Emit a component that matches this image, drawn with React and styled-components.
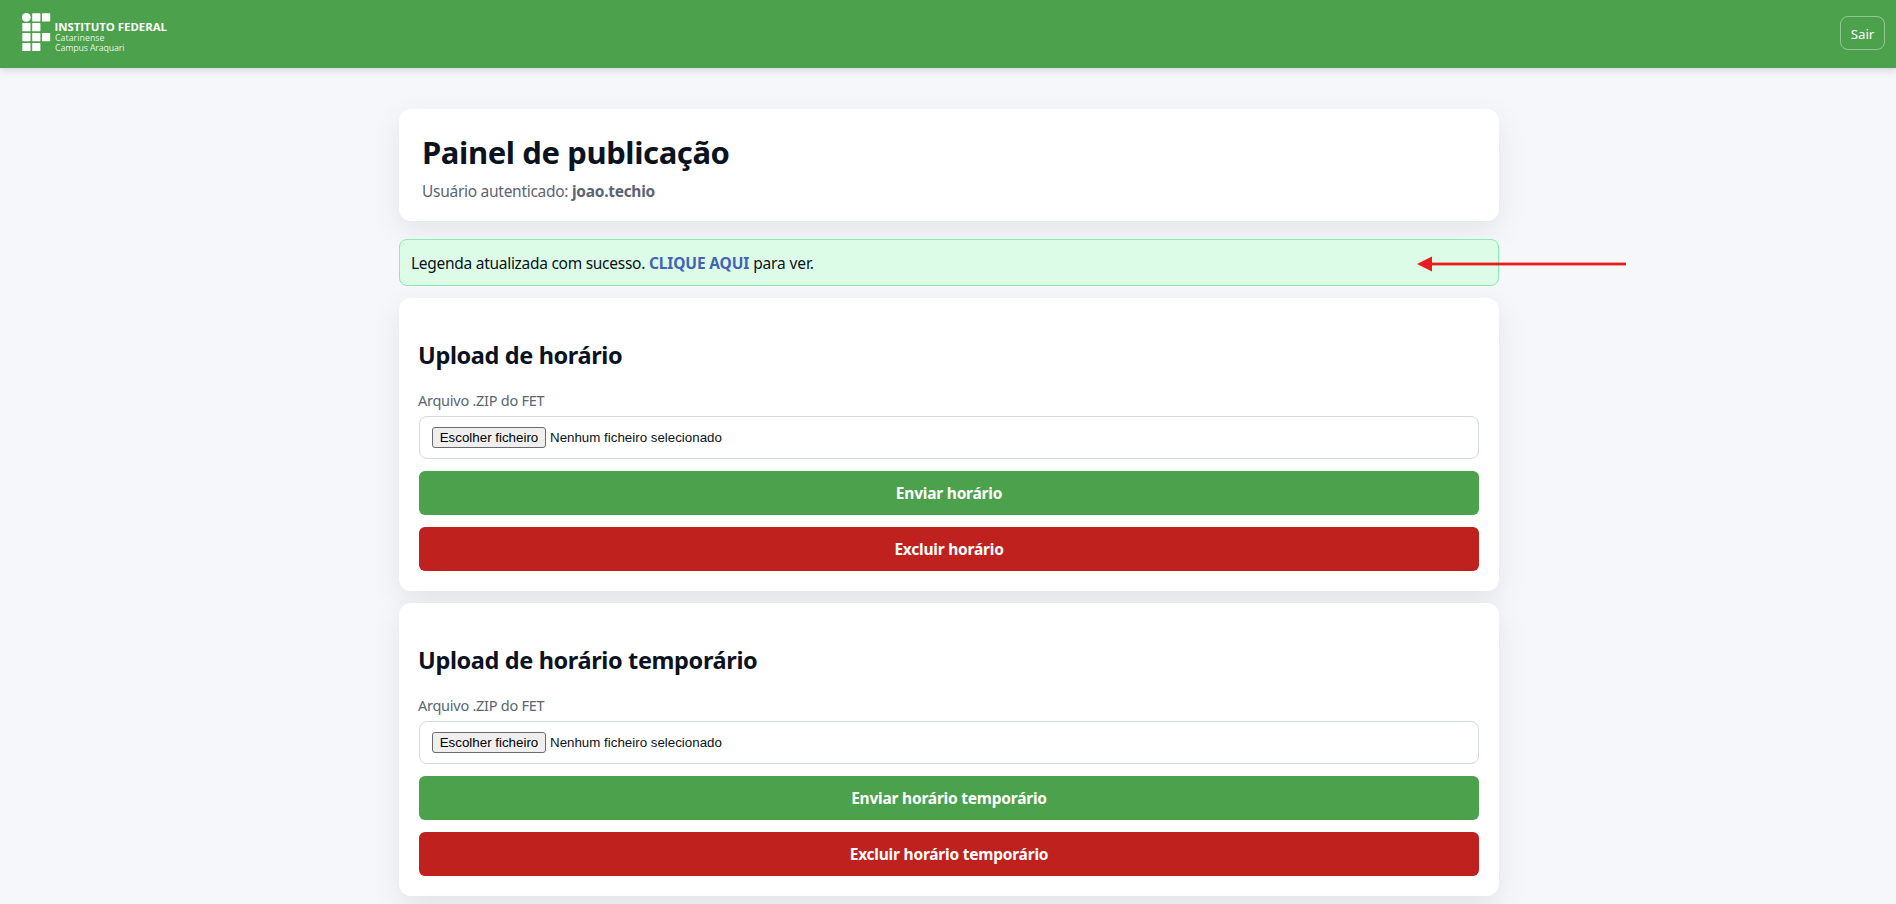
import React from 'react';
import styled, { createGlobalStyle } from 'styled-components';

const uploads = [
  { id: 1, name: 'horário' },
  { id: 2, name: 'horário temporário' },
];

const Logo = () => (
  <svg width="146" height="42" viewBox="0 0 146 42" fill="#fff">
    <circle cx="4.3" cy="4.3" r="4.4" />
    <rect x="10.2" y="0.2" width="8.2" height="8.2" rx="0.6" />
    <rect x="20" y="0.2" width="8.2" height="8.2" rx="0.6" />
    <rect x="0.3" y="10.1" width="8.2" height="8.2" rx="0.6" />
    <rect x="10.2" y="10.1" width="8.2" height="8.2" rx="0.6" />
    <rect x="0.3" y="20" width="8.2" height="8.2" rx="0.6" />
    <rect x="10.2" y="20" width="8.2" height="8.2" rx="0.6" />
    <rect x="20" y="20" width="8.2" height="8.2" rx="0.6" />
    <rect x="0.3" y="29.9" width="8.2" height="8.2" rx="0.6" />
    <rect x="10.2" y="29.9" width="8.2" height="8.2" rx="0.6" />
    <g fontFamily="'Open Sans', sans-serif">
      <text x="32.5" y="18" fontSize="11.4" fontWeight="700" textLength="112.5">
        INSTITUTO FEDERAL
      </text>
      <text x="33" y="28.3" fontSize="8.8" textLength="49.5" fillOpacity="0.9">
        Catarinense
      </text>
      <text x="33" y="38.3" fontSize="8.8" textLength="69.5" fillOpacity="0.9">
        Campus Araquari
      </text>
    </g>
  </svg>
);

const UploadCard = ({ name }) => (
  <Section>
    <SectionTitle>Upload de {name}</SectionTitle>
    <Label>Arquivo .ZIP do FET</Label>
    <FileField>
      <FileButton type="button">Escolher ficheiro</FileButton>
      <FileName>Nenhum ficheiro selecionado</FileName>
    </FileField>
    <ActionButton>Enviar {name}</ActionButton>
    <ActionButton $danger>Excluir {name}</ActionButton>
  </Section>
);

const App = () => {
  return (
    <Page>
      <GlobalStyle />
      <Header>
        <Logo />
        <LogoutButton>Sair</LogoutButton>
      </Header>
      <Main>
        <Intro>
          <Title>Painel de publicação</Title>
          <Subtitle>
            Usuário autenticado: <strong>joao.techio</strong>
          </Subtitle>
        </Intro>
        <Alert>
          <AlertText>Legenda atualizada com sucesso.</AlertText>
          <AlertLink href="#">CLIQUE AQUI</AlertLink>
          <AlertText $loose>para ver.</AlertText>
          <Arrow width="210" height="16" viewBox="0 0 210 16" fill="#e81c1c">
            <path d="M0 8 L15 0.5 V15.5 Z" />
            <rect x="14" y="6.6" width="195" height="2.8" />
          </Arrow>
        </Alert>
        {uploads.map(upload => (
          <UploadCard key={upload.id} name={upload.name} />
        ))}
        <Section />
      </Main>
    </Page>
  );
};

export default App;

const GlobalStyle = createGlobalStyle`
  * {
    box-sizing: border-box;
  }
  body {
    margin: 0;
    height: 904px;
    overflow: hidden;
    background: #f5f7fb;
    color: #0b1220;
    font-family: 'Noto Sans', 'Open Sans', sans-serif;
    font-size: 16px;
  }
`;

const Page = styled.div`
  width: 1898px;
  height: 904px;
  overflow: hidden;
`;

const Header = styled.header`
  display: flex;
  align-items: flex-start;
  justify-content: space-between;
  height: 68px;
  padding: 13px 13px 0 22px;
  background: #4ca14c;
  box-shadow: 0 2px 8px rgba(0, 0, 0, 0.15);
`;

const LogoutButton = styled.button`
  width: 45px;
  height: 34px;
  margin-top: 3px;
  padding: 1px 0 0;
  border: 1px solid rgba(255, 255, 255, 0.4);
  border-radius: 8px;
  background: transparent;
  color: #fff;
  font-family: inherit;
  font-size: 13.3px;
`;

const Main = styled.main`
  display: flex;
  flex-direction: column;
  gap: 12px;
  width: 1100px;
  margin: 41px auto 0;
`;

const Card = styled.section`
  flex-shrink: 0;
  border-radius: 12px;
  background: #fff;
  box-shadow: 0 10px 30px rgba(0, 0, 0, 0.08);
`;

const Intro = styled(Card)`
  height: 112px;
  margin-bottom: 6px;
  padding: 21px 23px;
`;

const Title = styled.h1`
  margin: 0;
  font-size: 31px;
  line-height: 44px;
  letter-spacing: -0.4px;
`;

const Subtitle = styled.p`
  margin: 6px 0 0;
  color: #5b6474;
  font-size: 15.5px;
  line-height: 22px;
  letter-spacing: -0.28px;
`;

const Alert = styled.div`
  position: relative;
  display: flex;
  align-items: center;
  gap: 4px;
  height: 47px;
  padding: 0 11px;
  border: 1px solid #86efac;
  border-radius: 8px;
  background: #dcfce7;
`;

const AlertText = styled.span`
  font-size: 15.5px;
  letter-spacing: ${({ $loose }) => ($loose ? '-0.13px' : '-0.28px')};
`;

const AlertLink = styled.a`
  color: #4463b5;
  font-size: 15.5px;
  font-weight: 700;
  letter-spacing: -0.15px;
  text-decoration: none;
`;

// seta vermelha por cima do aviso
const Arrow = styled.svg`
  position: absolute;
  top: 15.5px;
  left: 1017px;
`;

const Section = styled(Card)`
  display: flex;
  flex-direction: column;
  height: 293px;
  padding: 40px 20px 20px;
`;

const SectionTitle = styled.h2`
  margin: 0 0 0 -1px;
  font-size: 23.5px;
  line-height: 34px;
  letter-spacing: -0.37px;
`;

const Label = styled.label`
  margin: 18px 0 5px -1px;
  color: #5b6474;
  font-size: 14.5px;
  line-height: 21px;
  letter-spacing: -0.26px;
`;

const FileField = styled.div`
  display: flex;
  align-items: center;
  gap: 4px;
  height: 43px;
  padding: 0 12px;
  border: 1px solid #d3d8e2;
  border-radius: 8px;
`;

const FileButton = styled.button`
  width: 114px;
  height: 21px;
  padding: 0;
  border: 1px solid #6b6b6b;
  border-radius: 3px;
  background: #efefef;
  color: #000;
  font-family: 'Liberation Sans', Arial, sans-serif;
  font-size: 13.333px;
`;

const FileName = styled.span`
  font-family: 'Liberation Sans', Arial, sans-serif;
  font-size: 13.333px;
`;

const ActionButton = styled.button`
  height: 44px;
  margin-top: 12px;
  border: none;
  border-radius: 6px;
  background: ${({ $danger }) => ($danger ? '#bf211e' : '#4ca14c')};
  color: #fff;
  font-family: inherit;
  font-size: 15.5px;
  font-weight: 700;
  letter-spacing: -0.22px;
`;
